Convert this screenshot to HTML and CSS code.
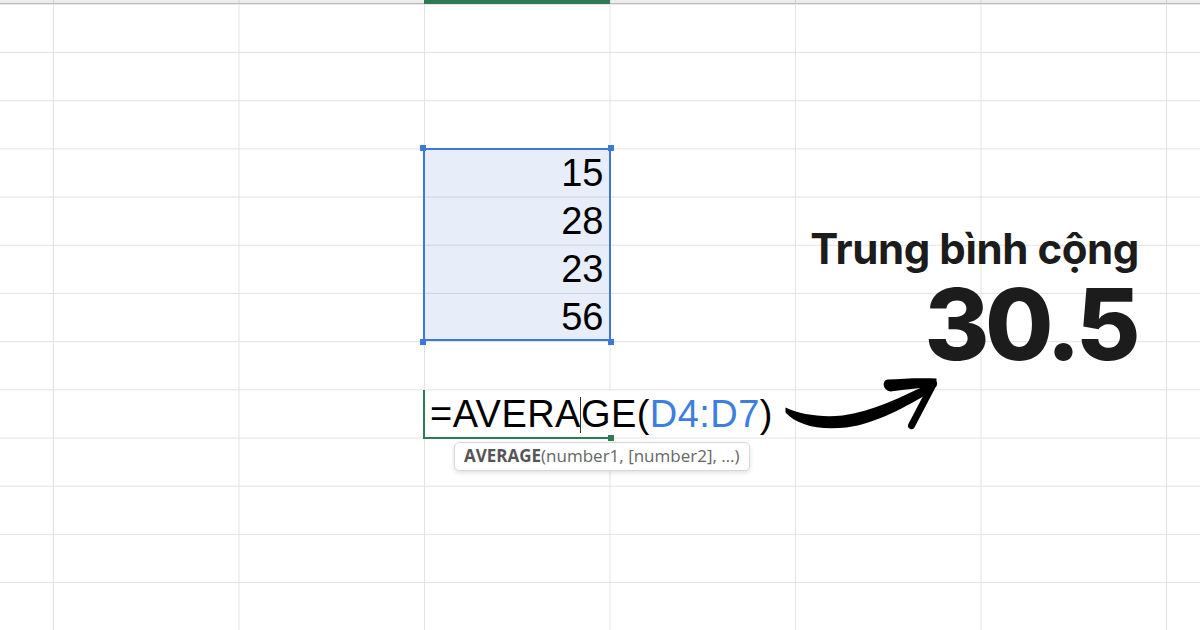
FILE: index.html
```html
<!DOCTYPE html>
<html lang="vi">
<head>
  <meta charset="UTF-8">
  <title>Trung bình cộng</title>
  <link rel="stylesheet" href="styles.css">
</head>
<body>

  <div class="sheet">
    <!-- column header strip -->
    <div class="col-head"></div>
    <div class="col-head-active"></div>

    <!-- selected range D4:D7 -->
    <div class="selection">
      <div class="num">15</div>
      <div class="num">28</div>
      <div class="num">23</div>
      <div class="num">56</div>
      <span class="handle tl"></span>
      <span class="handle tr"></span>
      <span class="handle bl"></span>
      <span class="handle br"></span>
    </div>

    <!-- cell being edited -->
    <div class="formula-cell">
      <div class="active-frame"><span class="fill-handle"></span></div>
      <span class="formula-text">=AVERA<span class="caret"></span>GE(<span class="ref">D4:D7</span>)</span>
      <div class="hint"><b>AVERAGE</b>(number1, [number2], …)</div>
    </div>

    <svg class="arrow" viewBox="609.5 341.4 371 96.4" xmlns="http://www.w3.org/2000/svg">
      <path d="M785,408 C800,415 820,418 842,416 C872,412 900,398 929,384 L933,391 C906,407 876,424 846,428 C816,431 796,425 785,413 Z" fill="#000"/>
      <path d="M887,380 C902,379 921,378 936,379 L936,387 C921,388 905,390 890,392 C882,391 881,381 887,380 Z" fill="#000"/>
      <path d="M933,384 L911,426" stroke="#000" stroke-width="7" stroke-linecap="round" fill="none"/>
    </svg>

    <!-- annotation -->
    <div class="result">
      <div class="result-label">Trung bình cộng</div>
      <div class="result-value">30.5</div>
    </div>
  </div>

</body>
</html>
```

FILE: styles.css
```css
body {
  margin: 0;
  width: 1200px;
  height: 630px;
  overflow: hidden;
  background: #fff;
  font-family: "Liberation Sans", Arial, sans-serif;
}

.sheet {
  display: grid;
  grid-template-columns: 53px repeat(6, 185.5px) 1fr;
  grid-template-rows: 4px repeat(13, 48.2px);
  height: 630px;
  background-image:
    linear-gradient(to right, #e2e2e2 1px, transparent 1px),
    linear-gradient(to bottom, #e2e2e2 1px, transparent 1px);
  background-size: 185.5px 100%, 100% 48.2px;
  background-position: 53px 0, 0 52px;
}

.col-head {
  grid-row: 1;
  grid-column: 1 / -1;
  background: rgba(0, 0, 0, 0.07);
  border-bottom: 1px solid #bcbcbc;
  box-sizing: border-box;
}

.col-head-active {
  grid-row: 1;
  grid-column: 4;
  background: #2e7a52;
}

/* selected range */
.selection {
  grid-column: 4;
  grid-row: 5 / 9;
  display: grid;
  grid-template-rows: repeat(4, 1fr);
  position: relative;
  background: rgba(60, 118, 212, 0.12);
}

.selection::after {
  content: "";
  position: absolute;
  inset: -1px -1px 0 -1px;
  border: 2px solid #3c78d8;
  pointer-events: none;
}

.num {
  text-align: right;
  padding-right: 6px;
  font-size: 38px;
  line-height: 48.2px;
  color: #000;
}

.handle {
  position: absolute;
  width: 6px;
  height: 6px;
  background: #3c78d8;
  z-index: 1;
}

.handle.tl { left: -4px; top: -4px; }
.handle.tr { right: -4px; top: -4px; }
.handle.bl { left: -4px; bottom: -4px; }
.handle.br { right: -4px; bottom: -4px; }

/* edited cell */
.formula-cell {
  grid-column: 4 / 6;
  grid-row: 10;
  position: relative;
  background: #fff;
  margin: 1px 0;
  white-space: nowrap;
}

.active-frame {
  position: absolute;
  left: -1px;
  top: -1px;
  bottom: -2px;
  width: 184px;
  border-left: 2px solid #2e7a52;
  border-bottom: 2px solid #2e7a52;
}

.fill-handle {
  position: absolute;
  right: -5px;
  bottom: -4px;
  width: 6px;
  height: 6px;
  background: #2e7a52;
}

.formula-text {
  display: block;
  padding-left: 6px;
  margin-top: -1px;
  font-size: 38px;
  line-height: 48.2px;
  letter-spacing: 0.45px;
  color: #000;
}

.caret {
  display: inline-block;
  width: 1px;
  height: 36px;
  margin: 0 -0.5px;
  background: #333;
  vertical-align: -6px;
}

.ref {
  color: #3c7fdf;
}

.hint {
  position: absolute;
  left: 30px;
  top: 51px;
  height: 29px;
  box-sizing: border-box;
  padding: 0 9px;
  border: 1px solid #d8d8d8;
  border-radius: 5px;
  background: #fff;
  box-shadow: 0 2px 5px rgba(0, 0, 0, 0.12);
  font-family: "Open Sans", sans-serif;
  font-size: 17px;
  line-height: 25px;
  color: #666;
  z-index: 2;
}

.hint b {
  font-weight: 700;
  color: #555;
}

/* arrow + annotation */
.arrow {
  grid-column: 5 / 7;
  grid-row: 9 / 11;
  width: 371px;
  height: 96.4px;
  z-index: 1;
}

.result {
  grid-column: 6 / 8;
  grid-row: 6 / 10;
  display: flex;
  flex-direction: column;
  align-items: flex-end;
  padding: 31px 27px 0 0;
  font-family: Inter, "Noto Sans", sans-serif;
  color: #1c1c1c;
}

.result-label {
  font-size: 42px;
  font-weight: 700;
  line-height: 42px;
  letter-spacing: -0.4px;
}

.result-value {
  margin-top: 14px;
  margin-right: 3px;
  font-size: 99px;
  font-weight: 800;
  line-height: 80px;
  letter-spacing: -4.5px;
}
```
